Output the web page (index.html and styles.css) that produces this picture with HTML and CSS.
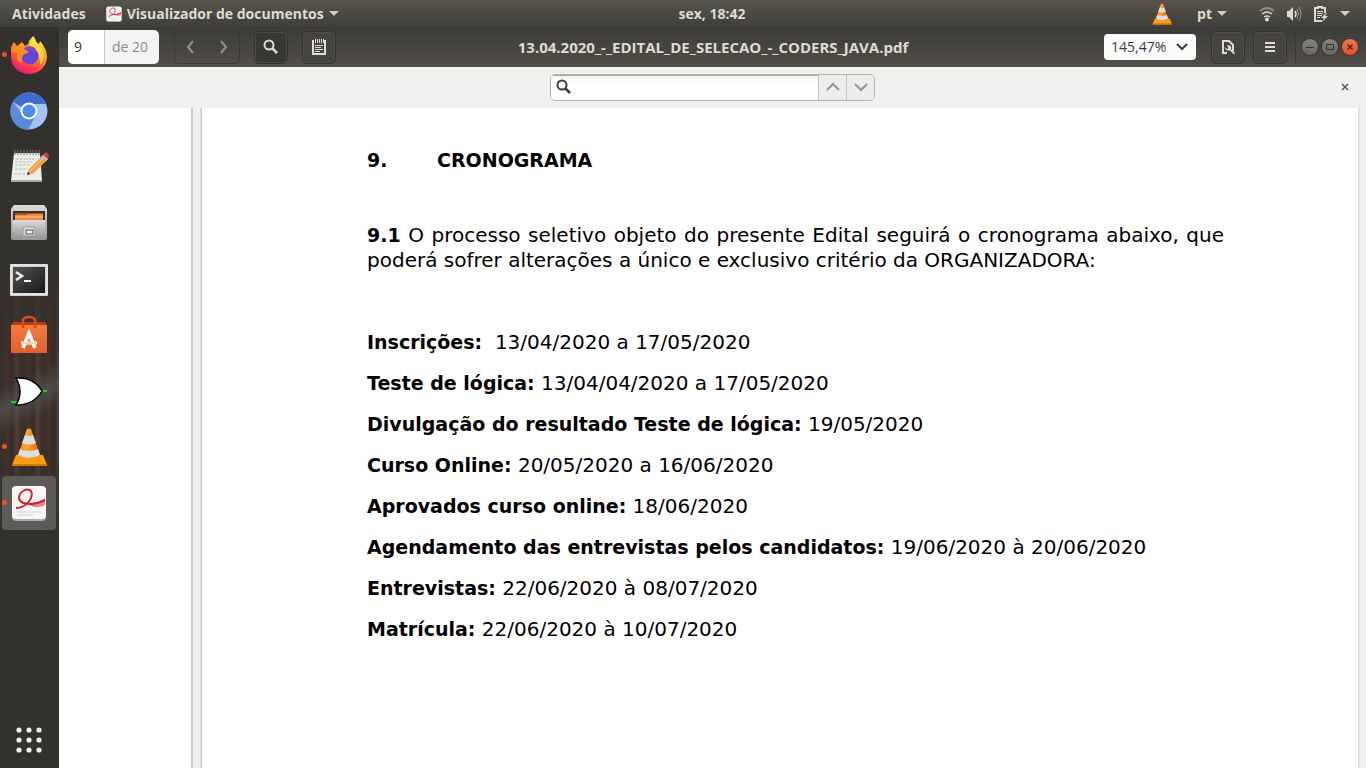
FILE: index.html
```html
<!DOCTYPE html>
<html lang="pt">
<head>
<meta charset="utf-8">
<title>13.04.2020_-_EDITAL_DE_SELECAO_-_CODERS_JAVA.pdf</title>
<link rel="stylesheet" href="styles.css">
</head>
<body>
<svg class="defs" aria-hidden="true">
  <defs>
    <linearGradient id="fire" x1="0.8" y1="0" x2="0.3" y2="1"><stop offset="0" stop-color="#fff04a"/><stop offset=".4" stop-color="#ff9a20"/><stop offset=".75" stop-color="#ff4046"/><stop offset="1" stop-color="#e3128a"/></linearGradient>
    <linearGradient id="cone" x1="0" x2="1"><stop offset="0" stop-color="#f58a08"/><stop offset=".4" stop-color="#ffa733"/><stop offset="1" stop-color="#db5f00"/></linearGradient>
    <linearGradient id="silver" x1="0" y1="0" x2="0" y2="1"><stop offset="0" stop-color="#dcdcdc"/><stop offset="1" stop-color="#979797"/></linearGradient>
    <linearGradient id="screen" x1="0" y1="0" x2="1" y2="1"><stop offset="0" stop-color="#555"/><stop offset="1" stop-color="#171717"/></linearGradient>
    <linearGradient id="bag" x1="0" y1="0" x2="0" y2="1"><stop offset="0" stop-color="#f47b42"/><stop offset="1" stop-color="#e35f2b"/></linearGradient>
    <symbol id="vlc" viewBox="0 0 40 40">
      <path d="M7 28h27l4 10q0 1-1 1H4q-1 0-1-1z" fill="#ff9d12"/><path d="M3 37h35v1q0 1-1 1H4q-1 0-1-1z" fill="#dc7400"/>
      <path d="M18 2q2-1 4 0l9 26q-10 6-22 0z" fill="url(#cone)"/>
      <path d="M16 8q4 2 8 0l3 8q-7 3-14 0zM11 22q9 4 18 0l2 6q-11 6-22 0z" fill="#dedede"/>
    </symbol>
    <symbol id="evince" viewBox="0 0 36 36">
      <rect x="1" y="2" width="34" height="34" rx="4" fill="#a9a9a7"/><rect x="1" y="1" width="34" height="33" rx="4" fill="#f7f7f7"/>
      <path d="M34 13v7c-8 4-14 2-20-3 9 3 14 0 20-4z" fill="#e4434d" opacity=".65"/>
      <path d="M5 23C16 23 23 12 20 6c-4-4-12 1-12 7 1 7 14 8 26 2" fill="none" stroke="#d81e2c" stroke-width="2"/>
      <path d="M6 27h24M6 30h16" stroke="#cfcfcf"/>
    </symbol>
    <symbol id="search" viewBox="0 0 16 16"><circle cx="6" cy="6" r="4.5" fill="none" stroke="currentColor" stroke-width="2"/><path d="M9 9l5 5" stroke="currentColor" stroke-width="2.5"/></symbol>
  </defs>
</svg>

<header class="topbar">
  <nav class="topbar-left">
    <button class="bar-button">Atividades</button>
    <button class="bar-button"><svg class="app-mini"><use href="#evince"/></svg>Visualizador de documentos<span class="caret"></span></button>
  </nav>
  <button class="bar-button clock">sex, 18:42</button>
  <div class="topbar-right">
    <button class="bar-button" aria-label="VLC"><svg class="tray-vlc"><use href="#vlc"/></svg></button>
    <button class="bar-button language">pt<span class="caret"></span></button>
    <button class="bar-button system" aria-label="Sistema">
      <svg width="16" height="16" viewBox="0 0 16 16" fill="none" stroke="#dcd9d2" stroke-width="2"><path d="M1 5q7-6 14 0" opacity=".45"/><path d="M3 8q5-4 10 0M5 11q3-2 6 0" stroke-width="1.500"/><circle cx="8" cy="13.500" r="2" fill="#dcd9d2" stroke="none"/></svg>
      <svg width="16" height="16" viewBox="0 0 16 16" fill="none" stroke="#dcd9d2"><path d="M1 5h2l4-4v14l-4-4H1z" fill="#dcd9d2" stroke="none"/><path d="M9 5q2 3 0 6" stroke-width="1.5"/><path d="M11 3q3 5 0 10M13 1q4 7 0 14" opacity=".5"/></svg>
      <svg width="16" height="16" viewBox="0 0 16 16" fill="none" stroke="#dcd9d2"><path d="M12 7V2H9V1H5v1H2v13h7" stroke-width="2"/><path d="M4 5.500h6M4 7.500h6M4 9.500h5M4 11.500h3" /><path d="M13 7l-5 5h3l-2 4 6-6h-3l2-3z" fill="#dcd9d2" stroke="none"/></svg>
      <span class="caret"></span>
    </button>
  </div>
</header>

<div class="desktop">
  <nav class="dock" aria-label="Aplicativos">
    <button class="launcher running" aria-label="Firefox"><svg viewBox="0 0 40 40"><path d="M2 12l3-5 3 4 5-4 3 4c3-1 4-3 4-5l4-5 3 6 3 2 1-3c5 6 7 11 7 16a18 17 0 0 1-36 0c0-4 0-7 0-10z" fill="url(#fire)"/><path d="M23 4l2-3 3 7 4 4c4 7 3 15-1 18 1-10-4-15-11-18z" fill="#ffe43b" opacity=".85"/><circle cx="21" cy="21" r="8.500" fill="#6546d3"/><path d="M12 17q5-5 11-2l5 4q0-7-7-8-6 0-9 6z" fill="#8e3ce2"/><path d="M2 17c3-7 7-4 12-4l6 4-6 3c-1 3-2 4-1 8-7-2-5-7-5-10z" fill="#ff8b19"/></svg></button>
    <button class="launcher" aria-label="Chromium"><svg viewBox="0 0 40 40"><circle cx="20" cy="20" r="18.500" fill="#a2c4f9"/><path d="M20 20L4 11A18.500 18.500 0 0 1 37 13H20z" fill="#3c6cd2"/><path d="M4 11a18.500 18.500 0 0 0 15 28l8-15-12 1z" fill="#5b8adb"/><circle cx="20" cy="20" r="8.500" fill="#fff"/><circle cx="20" cy="20" r="6.500" fill="#4a8af4"/></svg></button>
    <button class="launcher" aria-label="Editor de texto"><svg viewBox="0 0 40 40"><path d="M5 6h26l2 28H2z" fill="#ededeb"/><path d="M2 33h31v2H2z" fill="#aaa"/><path d="M6 3v5M9 3v5M12 3v5M15 3v5M18 3v5M21 3v5M24 3v5M27 3v5M30 3v5" stroke="#77756f"/><path d="M7 12h18M6 15h17M6 18h16M6 22h11M5 27h11" stroke="#bbb" stroke-dasharray="3 1"/><path d="M18 28l2-6L34 8l5 4-14 14z" fill="#eda451"/><path d="M34 8l3-3 4 4-3 3z" fill="#d93643"/><path d="M32 10l2-2 5 4-2 2z" fill="#bbb"/><path d="M18 28l1-3 2 2z" fill="#222"/><path d="M21 24l13-13" stroke="#ffcf91"/></svg></button>
    <button class="launcher" aria-label="Arquivos"><svg viewBox="0 0 40 40"><path d="M5 2h30l3 4v29q0 2-2 2H4q-2 0-2-2V6z" fill="url(#silver)"/><path d="M4 8h32v11H4z" fill="#333"/><path d="M6 10h28v8H6z" fill="#b34a12"/><path d="M6 12h11l2-1h15v7H6z" fill="#f48a36"/><path d="M6 14h28" stroke="#ffd09d"/><path d="M4 17h32v18H4z" fill="url(#silver)"/><rect x="14" y="24" width="12" height="9" rx="1" fill="#ddd" stroke="#999"/><rect x="17" y="27" width="7" height="4" fill="#eee" stroke="#555"/></svg></button>
    <button class="launcher" aria-label="Terminal"><svg viewBox="0 0 40 40"><rect x="1" y="5" width="38" height="32" rx="1" fill="#cfcfcf"/><path d="M2 6h36v29H2z" fill="none" stroke="#f4f4f4"/><rect x="4" y="8" width="32" height="26" fill="url(#screen)"/><path d="M7 13l6 4-6 4" fill="none" stroke="#eee" stroke-width="2.500"/><path d="M15 22h7" stroke="#fff" stroke-width="2"/></svg></button>
    <button class="launcher" aria-label="Programas"><svg viewBox="0 0 40 40"><path d="M4 7h32l2 4H2z" fill="#b93e12"/><path d="M2 10h36v28H2z" fill="url(#bag)"/><path d="M14 13V5q1-3 6-3t6 3v8" fill="none" stroke="#d94c1d" stroke-width="2.500"/><path d="M14 33l6-15 6 15" fill="none" stroke="#fff" stroke-width="3.500"/><path d="M12 28h16" stroke="#fff" stroke-width="3"/><path d="M12 28h15" stroke="#e4a078"/></svg></button>
    <button class="launcher" aria-label="Logisim"><svg viewBox="0 0 40 40"><path d="M2 9h8" stroke="#106b10"/><path d="M2 31h7M33 20h5" stroke="#00df00" stroke-width="2"/><path d="M7 7c15-1 22 6 26 13-4 7-11 14-26 14q8-13 0-27z" fill="#fff" stroke="#000" stroke-width="1.500"/></svg></button>
    <button class="launcher running" aria-label="VLC"><svg><use href="#vlc"/></svg></button>
    <button class="launcher running active" aria-label="Visualizador de documentos"><svg class="doc-icon"><use href="#evince"/></svg></button>
    <button class="launcher apps" aria-label="Mostrar aplicativos"><svg viewBox="0 0 40 40" fill="#f2f1ef"><circle cx="10" cy="10" r="2.600"/><circle cx="20" cy="10" r="2.600"/><circle cx="30" cy="10" r="2.600"/><circle cx="10" cy="20" r="2.600"/><circle cx="20" cy="20" r="2.600"/><circle cx="30" cy="20" r="2.600"/><circle cx="10" cy="30" r="2.600"/><circle cx="20" cy="30" r="2.600"/><circle cx="30" cy="30" r="2.600"/></svg></button>
  </nav>

  <div class="window">
    <div class="headerbar">
      <div class="tools-left">
        <label class="page-field"><input type="text" value="9" aria-label="Página"><span>de 20</span></label>
        <div class="history">
          <button aria-label="Anterior"><svg width="16" height="16" viewBox="0 0 16 16"><path d="M10 2L5 8l5 6" fill="none" stroke="currentColor" stroke-width="2"/></svg></button>
          <button aria-label="Próxima"><svg width="16" height="16" viewBox="0 0 16 16"><path d="M6 2l5 6-5 6" fill="none" stroke="currentColor" stroke-width="2"/></svg></button>
        </div>
        <button class="tool search-toggle" aria-label="Localizar"><svg width="16" height="16"><use href="#search"/></svg></button>
        <button class="tool" aria-label="Anotar"><svg width="16" height="16" viewBox="0 0 16 16" fill="none" stroke="currentColor"><path d="M3 2H2v13h12V2h-1" stroke-width="2"/><path d="M4.500 0v4M6.500 0v4M8.500 0v4M10.500 0v4M12.500 0v4M4 6.500h8M4 8.500h6M4 10.500h8M4 12.500h5"/></svg></button>
      </div>
      <h1 class="title">13.04.2020_-_EDITAL_DE_SELECAO_-_CODERS_JAVA.pdf</h1>
      <div class="tools-right">
        <button class="zoom-level">145,47%<svg width="14" height="14" viewBox="0 0 14 14"><path d="M2 4l5 5 5-5" fill="none" stroke="currentColor" stroke-width="2"/></svg></button>
        <button class="tool doc-menu" aria-label="Opções do documento"><svg width="16" height="16" viewBox="0 0 16 16"><path d="M7 14H3V2h6l4 4v6" fill="none" stroke="currentColor" stroke-width="2"/><path d="M5 8l2 2h1V8L7 6.500c3-1 5 1 4 3.500l4 4-1 1.500-4-4C7 12 5 11 5 8z" fill="currentColor"/></svg></button>
        <button class="tool" aria-label="Menu"><svg width="16" height="16" viewBox="0 0 16 16"><path d="M3 4h10M3 8h10M3 12h10" stroke="currentColor" stroke-width="2"/></svg></button>
        <div class="window-controls">
          <button aria-label="Minimizar"><svg width="16" height="16" viewBox="0 0 16 16"><path d="M4 8.500h8" stroke="#33312c"/></svg></button>
          <button aria-label="Maximizar"><svg width="16" height="16" viewBox="0 0 16 16"><path d="M4.500 5.500h7v5h-7z" fill="none" stroke="#33312c"/></svg></button>
          <button class="close" aria-label="Fechar"><svg width="16" height="16" viewBox="0 0 16 16"><path d="M5.500 5.500l5 5M10.500 5.500l-5 5" stroke="#4b1c09" stroke-width="1.200"/></svg></button>
        </div>
      </div>
    </div>

    <div class="findbar">
      <div class="find-group">
        <label class="find-field"><svg width="16" height="16"><use href="#search"/></svg><input type="text" aria-label="Localizar no documento"></label>
        <button aria-label="Ocorrência anterior"><svg width="16" height="16" viewBox="0 0 16 16"><path d="M2 11l6-6 6 6" fill="none" stroke="currentColor" stroke-width="2"/></svg></button>
        <button aria-label="Próxima ocorrência"><svg width="16" height="16" viewBox="0 0 16 16"><path d="M2 5l6 6 6-6" fill="none" stroke="currentColor" stroke-width="2"/></svg></button>
      </div>
      <button class="find-close" aria-label="Fechar busca"><svg width="8" height="8" viewBox="0 0 8 8"><path d="M1 1l6 6M7 1L1 7" stroke="#4c4c4a" stroke-width="1.300"/></svg></button>
    </div>

    <main class="viewer">
      <div class="previous-page"></div>
      <article class="page">
        <h2><span class="number">9.</span>CRONOGRAMA</h2>
        <p class="intro"><b>9.1</b> O processo seletivo objeto do presente Edital seguirá o cronograma abaixo, que poderá sofrer alterações a único e exclusivo critério da ORGANIZADORA:</p>
        <div class="dates">
          <p><b>Inscrições:</b>&nbsp; 13/04/2020 a 17/05/2020</p>
          <p><b>Teste de lógica:</b> 13/04/04/2020 a 17/05/2020</p>
          <p><b>Divulgação do resultado Teste de lógica:</b> 19/05/2020</p>
          <p><b>Curso Online:</b> 20/05/2020 a 16/06/2020</p>
          <p><b>Aprovados curso online:</b> 18/06/2020</p>
          <p><b>Agendamento das entrevistas pelos candidatos:</b> 19/06/2020 à 20/06/2020</p>
          <p><b>Entrevistas:</b> 22/06/2020 à 08/07/2020</p>
          <p><b>Matrícula:</b> 22/06/2020 à 10/07/2020</p>
        </div>
      </article>
    </main>
  </div>
</div>
</body>
</html>
```

FILE: styles.css
```css
* { box-sizing: border-box; }
body {
  margin: 0;
  height: 100vh;
  display: flex;
  flex-direction: column;
  overflow: hidden;
  font: 14px/20px "Open Sans", "Noto Sans", sans-serif;
  color: #dfdbd2;
}
button, input { font: inherit; color: inherit; margin: 0; padding: 0; border: 0; background: none; }
svg { display: block; flex: none; }
.defs { position: absolute; width: 0; height: 0; }

.topbar {
  height: 27px;
  flex: none;
  display: grid;
  grid-template-columns: 1fr auto 1fr;
  align-items: center;
  padding: 0 16px 0 12px;
  background: linear-gradient(#57544b, #3f3e39);
  font-weight: 700;
}
.topbar-left, .topbar-right { display: flex; align-items: center; }
.topbar-left { gap: 20px; }
.topbar-right { justify-content: flex-end; }
.bar-button { display: flex; align-items: center; gap: 5px; white-space: nowrap; }
.clock { padding-left: 62px; }
.caret { border: 5px solid transparent; border-top-color: #d0cdc6; border-bottom: 0; }
.app-mini { width: 16px; height: 16px; }
.tray-vlc { width: 22px; height: 22px; }
.language { margin-left: 24px; }
.system { margin-left: 32px; gap: 11px; }

.desktop { flex: 1; min-height: 0; display: flex; }
.dock {
  width: 59px;
  flex: none;
  display: flex;
  flex-direction: column;
  align-items: center;
  gap: 2px;
  padding: 1px 3px 1px 2px;
  background:
    linear-gradient(#33312d 32%, transparent 48%, transparent 56%, #33312d 68%),
    linear-gradient(155deg, transparent 47%, #59646288 50%, transparent 53%),
    repeating-linear-gradient(90deg, #38302c 0 4px, #493029 6px 8px, #332e2b 11px 13px, #553b31 16px 17px, #38302c 21px);
}
.launcher { position: relative; width: 54px; height: 54px; flex: none; display: grid; place-items: center; border-radius: 4px; }
.launcher svg { width: 40px; height: 40px; }
.launcher .doc-icon { width: 36px; height: 36px; }
.launcher.active { background: #5c5b57; }
.launcher.running::before {
  content: "";
  position: absolute;
  left: 0;
  top: 24px;
  width: 5px;
  height: 5px;
  border-radius: 50%;
  background: #e95420;
}
.apps { margin-top: auto; }

.window { flex: 1; min-width: 0; display: flex; flex-direction: column; }
.headerbar {
  height: 40px;
  flex: none;
  display: grid;
  grid-template-columns: 1fr auto 1fr;
  align-items: center;
  padding: 0 8px 0 9px;
  background: linear-gradient(#3c3b37, #524f47);
}
.tools-left, .tools-right { display: flex; align-items: center; }
.tools-right { justify-content: flex-end; }
.page-field {
  display: flex;
  width: 91px;
  height: 34px;
  overflow: hidden;
  border-radius: 5px;
  background: #f3f3f2;
  color: #8b8b89;
  line-height: 34px;
}
.page-field input { width: 37px; padding: 0 6px; border-right: 1px solid #c9c9c7; background: #fff; color: #333; }
.page-field span { padding-left: 7px; }
.history { display: flex; margin-left: 15px; border: 1px solid #3a3935; border-radius: 5px; color: #94918a; }
.history button { width: 32px; height: 31px; display: grid; place-items: center; }
.tool {
  width: 34px;
  height: 33px;
  display: grid;
  place-items: center;
  border: 1px solid #33322e;
  border-radius: 5px;
  background: #45443f;
  box-shadow: inset 0 0 0 1px #4e4c46;
  color: #dfdbd2;
}
.tool + .tool { margin-left: 14px; }
.tools-right .tool + .tool { margin-left: 8px; }
.tools-left .search-toggle { margin-left: 14px; background: #383733; }
.tools-right .doc-menu { margin-left: 15px; }
.title { margin: 0; font-size: 15px; line-height: 20px; font-weight: 700; white-space: nowrap; }
.zoom-level {
  display: flex;
  align-items: center;
  justify-content: space-between;
  width: 92px;
  height: 26px;
  padding: 0 7px;
  border-radius: 4px;
  background: #fcfcfc;
  color: #3c3c3a;
}
.window-controls { display: flex; gap: 4px; margin-left: 8px; padding: 8px 0 8px 6px; border-left: 1px solid #3a3935; }
.window-controls button { border-radius: 50%; background: linear-gradient(#85837b, #69675f); box-shadow: 0 0 0 1px #35342f; }
.window-controls .close { background: linear-gradient(#f27850, #e4501e); }

.findbar {
  height: 41px;
  flex: none;
  display: grid;
  grid-template-columns: 1fr auto 1fr;
  align-items: center;
  padding: 0 17px 1px;
  background: #f1f0ee;
}
.find-group { grid-column: 2; display: flex; height: 27px; border: 1px solid #b5b3af; border-radius: 5px; overflow: hidden; color: #98958f; }
.find-field { width: 267px; display: flex; align-items: center; gap: 4px; padding: 0 5px; background: linear-gradient(#f2f2f2, #fff 35%); box-shadow: inset 0 1px #aaa; color: #3c3c3a; }
.find-field input { flex: 1; min-width: 0; outline: 0; }
.find-group button { width: 28px; display: grid; place-items: center; border-left: 1px solid #c5c3bf; background: #ededeb; }
.find-close { justify-self: end; }

.viewer { flex: 1; min-height: 0; display: flex; padding-right: 8px; background: #f0efed; }
.previous-page { width: 132px; flex: none; background: #fff; box-shadow: 2px 0 #c8c8c6; }
.page {
  flex: 1;
  margin-left: 11px;
  padding: 40px 134px 0 165px;
  background: #fff;
  box-shadow: -1px 0 #c8c8c6, -2px 0 #dddcda, 1px 0 #dcdbd9, 2px 0 #e6e5e3;
  color: #000;
  font: 20px/25px Verdana, "DejaVu Sans", sans-serif;
}
.page p { margin: 0; }
.page h2 { display: flex; margin: 0 0 50px; font-size: 19px; line-height: 25px; }
.page b { font-size: 19px; }
.number { width: 70px; }
.page .intro { text-align: justify; }
.dates { display: grid; gap: 16px; margin-top: 57px; }
```
